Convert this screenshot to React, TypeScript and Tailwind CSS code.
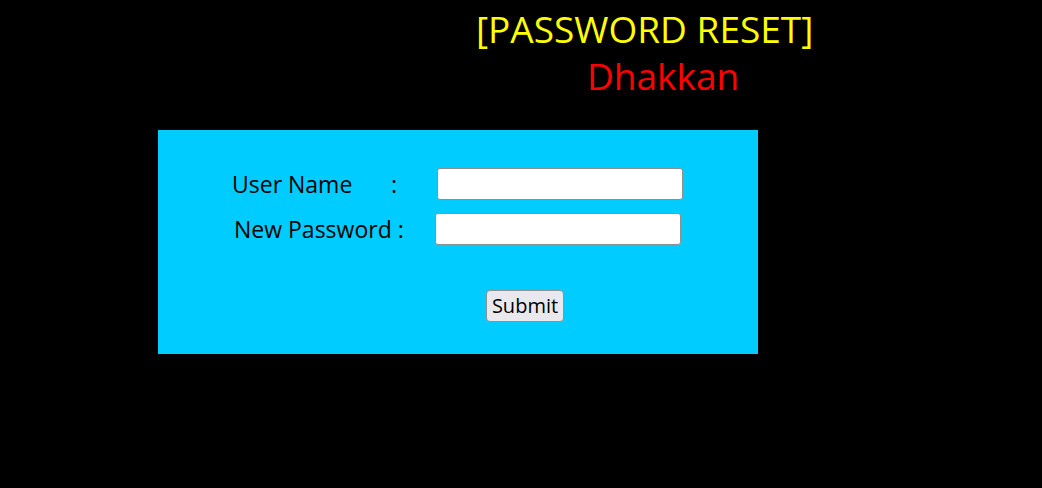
export default function App() {
  return (
    <div className="w-[1042px] h-[488px] bg-black overflow-hidden" style={{ fontFamily: '"Open Sans", "Noto Sans", sans-serif' }}>
      <div className="pt-[4px] flex flex-col">
        <h1 className="ml-[476px] text-[37px] leading-[50px] text-[#ffff00] whitespace-nowrap">[PASSWORD RESET]</h1>
        <h2 className="ml-[587px] text-[37px] leading-[44px] text-[#ff0000] whitespace-nowrap">Dhakkan</h2>
      </div>
      <div className="ml-[158px] mt-[32px] w-[600px] h-[224px] bg-[#00ccff] flex flex-col pt-[38px]">
        <div className="flex items-center h-[32px]">
          <span className="ml-[74px] w-[159px] text-[23px] text-black whitespace-nowrap">User Name</span>
          <span className="text-[23px] text-black">:</span>
          <input type="text" className="ml-[40px] w-[246px] h-[32px] bg-white border border-[#8f8f8f] rounded-[3px]" />
        </div>
        <div className="flex items-center h-[32px] mt-[13px]">
          <span className="ml-[76px] text-[23px] text-black whitespace-nowrap">New Password :</span>
          <input type="password" className="ml-[31px] w-[246px] h-[32px] bg-white border border-[#8f8f8f] rounded-[3px]" />
        </div>
        <div className="mt-[45px] ml-[328px]">
          <button className="w-[78px] h-[32px] bg-[#e9e9ed] border border-[#8f8f8f] rounded-[4px] text-[20px] text-black leading-none">Submit</button>
        </div>
      </div>
    </div>
  );
}
